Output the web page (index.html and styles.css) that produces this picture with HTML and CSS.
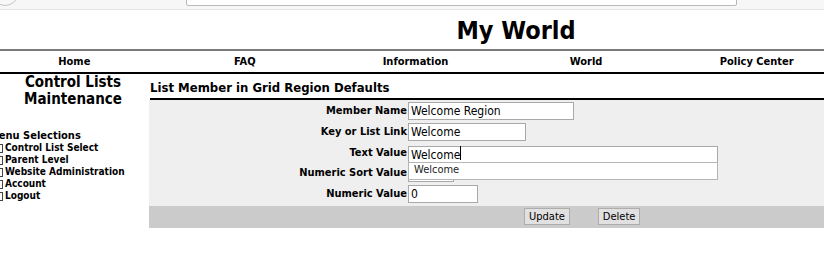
FILE: index.html
```html
<!DOCTYPE html>
<html lang="en">
<head>
  <meta charset="UTF-8">
  <meta name="viewport" content="width=device-width, initial-scale=1.0">
  <title>My World</title>
  <link rel="stylesheet" href="styles.css">
</head>
<body>

<div class="chrome">
  <div class="chrome-btn"></div>
  <div class="chrome-url"></div>
</div>

<div class="page">
  <div class="header">
    <h1>My World</h1>
  </div>
  <div class="nav">
    <a href="#">Home</a>
    <a href="#">FAQ</a>
    <a href="#">Information</a>
    <a href="#">World</a>
    <a href="#">Policy Center</a>
  </div>

  <div class="content">
    <div class="sidebar">
      <h2>Control Lists<br>Maintenance</h2>
      <div class="menu">
        <h3>Menu Selections</h3>
        <ul>
          <li><span class="box"></span>Control List Select</li>
          <li><span class="box"></span>Parent Level</li>
          <li><span class="box"></span>Website Administration</li>
          <li><span class="box"></span>Account</li>
          <li><span class="box"></span>Logout</li>
        </ul>
      </div>
    </div>

    <div class="main">
      <h4>List Member in Grid Region Defaults</h4>
      <form class="grid-form">
        <div class="form-row">
          <label for="memberName">Member Name</label>
          <input type="text" id="memberName" class="w-name" value="Welcome Region">
        </div>
        <div class="form-row">
          <label for="keyLink">Key or List Link</label>
          <input type="text" id="keyLink" class="w-key" value="Welcome">
        </div>
        <div class="form-row suggest-host">
          <label for="textValue">Text Value</label>
          <div class="field">
            <input type="text" id="textValue" class="w-text" value="Welcome">
            <span class="caret"></span>
            <div class="suggest">Welcome</div>
          </div>
        </div>
        <div class="form-row">
          <label for="sortValue">Numeric Sort Value</label>
          <input type="text" id="sortValue" class="w-sort" value="">
        </div>
        <div class="form-row">
          <label for="numValue">Numeric Value</label>
          <input type="text" id="numValue" class="w-num" value="0">
        </div>
        <div class="actions">
          <button type="button">Update</button>
          <button type="button">Delete</button>
        </div>
      </form>
    </div>
  </div>
</div>

</body>
</html>
```

FILE: styles.css
```css
body {
  font-family: Tahoma, 'DejaVu Sans Condensed', 'DejaVu Sans', sans-serif;
  background-color: #fff;
  margin: 0;
  padding: 0;
  overflow: hidden;
  color: #000;
}
.chrome {
  height: 9px;
  background-color: #f7f7f7;
  border-bottom: 1px solid #e4e4e4;
  display: flex;
  overflow: hidden;
}
.chrome-btn {
  width: 26px;
  height: 26px;
  margin: -22px 0 0 -9px;
  border: 1px solid #c4c4c4;
  border-radius: 50%;
  flex: none;
}
.chrome-url {
  width: 549px;
  height: 14px;
  margin: -10px 0 0 167px;
  border: 1px solid #b9b9b9;
  border-radius: 2px;
  background-color: #fff;
  flex: none;
}
.page {
  width: 853px;
  margin-left: -11px;
}
.header {
  height: 39px;
  padding-left: 201px;
  border-bottom: 2px solid #7a7a7a;
}
h1 {
  margin: 0;
  padding-top: 6px;
  text-align: center;
  font-size: 25px;
  line-height: 30px;
}
.nav {
  display: grid;
  grid-template-columns: repeat(5, 1fr);
  height: 21px;
  border-bottom: 2px solid #000;
}
.nav a {
  text-align: center;
  font-size: 11px;
  font-weight: bold;
  line-height: 21px;
  color: #000;
  text-decoration: none;
}
.content {
  display: flex;
}
.sidebar {
  width: 160px;
  flex: none;
}
.sidebar h2 {
  margin: 0 0 0 8px;
  text-align: center;
  font-size: 15px;
  line-height: 17px;
}
.menu {
  margin-top: 21px;
}
.menu h3 {
  margin: 0;
  font-size: 11px;
  line-height: 13px;
}
.menu ul {
  list-style: none;
  margin: 0;
  padding: 0;
}
.menu li {
  display: flex;
  align-items: center;
  font-size: 10px;
  font-weight: bold;
  line-height: 12px;
  white-space: nowrap;
}
.box {
  width: 8px;
  height: 9px;
  box-sizing: border-box;
  border: 1px solid #444;
  margin: 0 2px 0 6px;
  flex: none;
}
.main {
  flex: 1;
}
.main h4 {
  margin: 4px 0 0 1px;
  font-size: 13px;
  line-height: 19px;
  height: 20px;
  border-bottom: 2px solid #000;
}
.grid-form {
  background-color: #efefef;
  padding-top: 2px;
}
.form-row {
  display: flex;
  align-items: flex-start;
  height: 20.75px;
}
.form-row label {
  width: 258px;
  text-align: right;
  font-size: 11px;
  font-weight: bold;
  line-height: 18px;
  padding-right: 1px;
}
input[type="text"] {
  height: 18px;
  box-sizing: border-box;
  border: 1px solid #a9a9a9;
  padding: 0 2px;
  font-family: Tahoma, 'DejaVu Sans Condensed', sans-serif;
  font-size: 12px;
  background-color: #fff;
  margin: 0;
}
.w-name { width: 166px; }
.w-key { width: 118px; }
.w-text { width: 310px; }
.w-sort { width: 46px; }
.w-num { width: 70px; }
.field {
  position: relative;
  height: 18px;
}
.caret {
  position: absolute;
  left: 52px;
  top: 2px;
  width: 1px;
  height: 14px;
  background-color: #000;
}
.suggest {
  position: absolute;
  left: 0;
  top: 18px;
  width: 303px;
  height: 16px;
  border: 1px solid #b5b5b5;
  background-color: #fff;
  font-size: 11px;
  line-height: 14px;
  padding-left: 5px;
  color: #222;
  z-index: 2;
}
.suggest-host {
  z-index: 2;
}
.actions {
  background-color: #cbcbcb;
  height: 22px;
  padding-left: 375px;
  display: flex;
  align-items: center;
  gap: 28px;
}
button {
  height: 17px;
  padding: 0 4px;
  background-color: #e1e1e1;
  border: 1px solid #adadad;
  font-family: Tahoma, 'DejaVu Sans Condensed', sans-serif;
  font-size: 11px;
  color: #000;
  cursor: pointer;
}
```
